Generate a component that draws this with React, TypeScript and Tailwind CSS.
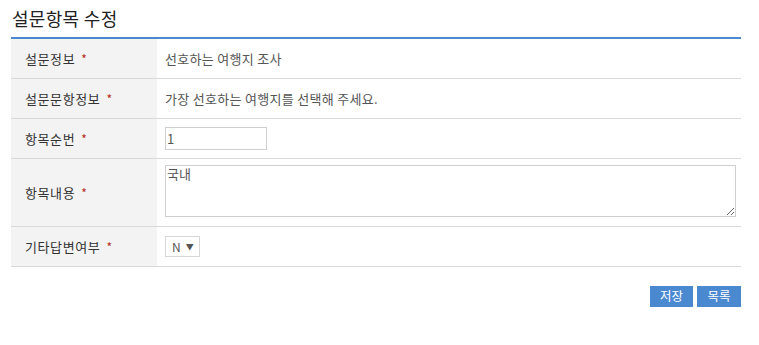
import React from 'react';

const rows = [
  { label: '설문정보', kind: 'text', value: '선호하는 여행지 조사' },
  { label: '설문문항정보', kind: 'text', value: '가장 선호하는 여행지를 선택해 주세요.' },
  { label: '항목순번', kind: 'input', value: '1' },
  { label: '항목내용', kind: 'textarea', value: '국내' },
  { label: '기타답변여부', kind: 'select', value: 'N' },
];

export default function App() {
  return (
    <div className="min-h-screen bg-white px-[11px] pt-[6px] text-[#333]" style={{ fontFamily: '"Noto Sans CJK KR", "Noto Sans", sans-serif' }}>
      <h2 className="pl-px text-[18px] leading-[24px] tracking-[0.3px] text-[#222]">설문항목 수정</h2>

      <div className="mt-[7px] w-[730px] border-t-2 border-[#4a88d0]">
        {rows.map((r) => (
          <div key={r.label} className="flex border-b border-[#d9d9d9]">
            <div className="flex w-[146px] shrink-0 items-center bg-[#f3f3f3] pl-[14px] text-[13px] tracking-[0.6px] text-[#333]">
              {r.label}
              <span className="ml-[6px] text-[12px] text-[#b22a1a]">*</span>
            </div>
            {r.kind === 'text' && (
              <div className="flex h-[39px] items-center pl-[8px] text-[13px] tracking-[0.3px] text-[#555]">{r.value}</div>
            )}
            {r.kind === 'input' && (
              <div className="flex h-[39px] items-center pl-[8px]">
                <input
                  defaultValue={r.value}
                  className="h-[23px] w-[102px] border border-[#cfcfcf] px-[1px] text-[13px] text-[#555] outline-none"
                />
              </div>
            )}
            {r.kind === 'textarea' && (
              <div className="flex flex-1 pb-[9px] pl-[8px] pr-[5px] pt-[6px]">
                <textarea
                  defaultValue={r.value}
                  className="block h-[52px] w-full border border-[#cfcfcf] px-[1px] text-[13px] leading-[15px] text-[#555] outline-none"
                />
              </div>
            )}
            {r.kind === 'select' && (
              <div className="flex h-[39px] items-center pl-[8px]">
                <div className="flex h-[21px] w-[35px] items-center border border-[#d6d6d6] pl-[6px] text-[12px] text-[#555]">
                  <span>N</span>
                  <span className="ml-[5px] text-[8px] text-[#555]">▼</span>
                </div>
              </div>
            )}
          </div>
        ))}
      </div>

      <div className="mt-[19px] flex w-[730px] justify-end gap-[4px]">
        <button className="h-[21px] w-[43px] bg-[#4a88d0] text-[12.5px] text-white">저장</button>
        <button className="h-[21px] w-[44px] bg-[#4a88d0] text-[12.5px] text-white">목록</button>
      </div>
    </div>
  );
}
